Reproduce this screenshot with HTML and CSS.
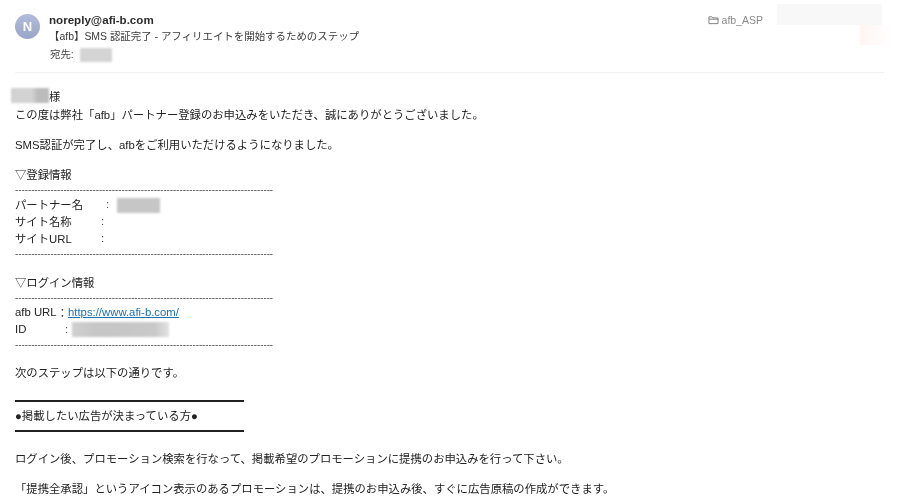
FILE: index.html
```html
<!DOCTYPE html>
<html lang="ja">
<head>
<meta charset="utf-8">
<title>afb</title>
<link rel="stylesheet" href="styles.css">
</head>
<body>
<div class="mail">
  <header class="head">
    <div class="avatar">N</div>
    <div class="meta">
      <div class="from">noreply@afi-b.com</div>
      <div class="subject">【afb】SMS 認証完了 - アフィリエイトを開始するためのステップ</div>
      <div class="to">宛先: <span class="blur blur-to"></span></div>
    </div>
    <div class="folder">
      <svg class="folder-icon" viewBox="0 0 12 11" width="11" height="10"><path d="M1 9.5V2h3.2l1 1.2H11v6.3zM1 4.6h10" fill="none" stroke="#777" stroke-width="1"/></svg>
      <span>afb_ASP</span>
    </div>
    <div class="smudge"><div class="smudge-top"></div><div class="smudge-pink"></div></div>
  </header>
  <main class="body">
    <div class="row"><span class="blur blur-name"></span>様</div>
    <div class="row gap-1">この度は弊社「afb」パートナー登録のお申込みをいただき、誠にありがとうございました。</div>
    <div class="row gap-13">SMS認証が完了し、afbをご利用いただけるようになりました。</div>
    <div class="row gap-13">▽登録情報</div>
    <div class="dash">--------------------------------------------------------------------------------</div>
    <div class="row pull"><span class="lab lab-a">パートナー名</span><span class="colon">:</span><span class="blur blur-partner"></span></div>
    <div class="row"><span class="lab lab-b">サイト名称</span><span class="colon">:</span></div>
    <div class="row"><span class="lab lab-b">サイトURL</span><span class="colon">:</span></div>
    <div class="dash">--------------------------------------------------------------------------------</div>
    <div class="row gap-12">▽ログイン情報</div>
    <div class="dash">--------------------------------------------------------------------------------</div>
    <div class="row pull"><span>afb URL</span><span>：</span><a class="link" href="#">https://www.afi-b.com/</a></div>
    <div class="row"><span class="lab lab-d">ID</span><span class="colon">:</span><span class="blur blur-id"></span></div>
    <div class="dash">--------------------------------------------------------------------------------</div>
    <div class="row gap-11">次のステップは以下の通りです。</div>
    <div class="rule rule-a"></div>
    <div class="row banner">●掲載したい広告が決まっている方●</div>
    <div class="rule"></div>
    <div class="row gap-18">ログイン後、プロモーション検索を行なって、掲載希望のプロモーションに提携のお申込みを行って下さい。</div>
    <div class="row gap-13">「提携全承認」というアイコン表示のあるプロモーションは、提携のお申込み後、すぐに広告原稿の作成ができます。</div>
  </main>
</div>
</body>
</html>
```
FILE: styles.css
```css
html, body { margin: 0; padding: 0; background: #fff; }
body {
  width: 900px; height: 500px; overflow: hidden;
  font-family: "Liberation Sans", "Noto Sans CJK JP", sans-serif;
  font-size: 11px; color: #222;
}
.mail { padding: 0 16px 0 15px; filter: blur(0.25px); }
.head {
  display: flex; align-items: flex-start; height: 72px;
  border-bottom: 1px solid #f1f1f1;
}
.avatar {
  width: 25px; height: 25px; margin-top: 14px; border-radius: 50%;
  background: linear-gradient(#b3bcd9, #99a5c9);
  color: #fff; font-weight: bold; font-size: 13px; line-height: 25px; text-align: center;
  flex: none;
}
.meta { margin-left: 9px; padding-top: 11px; flex: 1; }
.from { font-weight: bold; font-size: 11.6px; line-height: 17px; color: #2c2c2c; }
.subject { line-height: 18px; font-size: 10.45px; color: #3a3a3a; white-space: nowrap; }
.to { line-height: 18px; font-size: 10.4px; color: #444; display: flex; align-items: center; gap: 6px; padding-left: 1px; }
.folder {
  display: flex; align-items: center; gap: 3px; margin: 14px 1px 0 0;
  font-size: 10.5px; line-height: 12px; color: #8a8a8a;
}
.folder-icon { flex: none; }
.smudge { width: 105px; margin: 4px 2px 0 13px; flex: none; position: relative; height: 41px; }
.smudge-top { height: 21px; background: #f8f8f8; }
.smudge-pink {
  position: absolute; right: -12px; top: 21px; width: 34px; height: 20px;
  background: linear-gradient(90deg, #fff6f4, #fffafa, #fff);
}
.blur { display: inline-block; background: #c9c9c9; filter: blur(0.8px); }
.blur-to { width: 32px; height: 14px; background: #d4d4d4; }
.blur-name { width: 38px; height: 15px; margin-left: -4px; background: linear-gradient(90deg, #d2d2d2 55%, #bcbcbc 70%); }
.blur-partner { width: 43px; height: 15px; margin: 3px 0 0 8px; background: #c6c6c6; }
.blur-id { width: 97px; height: 15px; margin: 2px 0 0 4px; background: linear-gradient(90deg, #d0d0d0, #c6c6c6 25%, #c9c9c9 85%, #e2e2e2); }
.body { padding-top: 14px; }
.row { display: flex; align-items: center; height: 17px; white-space: nowrap; font-size: 11.35px; }
.gap-1 { margin-top: 1px; }
.gap-11 { margin-top: 11px; }
.gap-12 { margin-top: 12px; }
.gap-13 { margin-top: 13px; }
.gap-18 { margin-top: 18px; }
.pull { margin-top: -2px; }
.dash { height: 15px; line-height: 15px; font-size: 9.7px; color: #333; overflow: hidden; width: 258px; white-space: nowrap; }
.lab-a { width: 91px; }
.lab-b { width: 86px; }
.lab-d { width: 50px; }
.colon { color: #444; }
.link { color: #1a6fb5; text-decoration: underline; }
.rule { width: 229px; height: 1.5px; background: #222; }
.rule-a { margin-top: 20px; }
.banner { margin-top: 4.5px; margin-bottom: 7px; }
```
